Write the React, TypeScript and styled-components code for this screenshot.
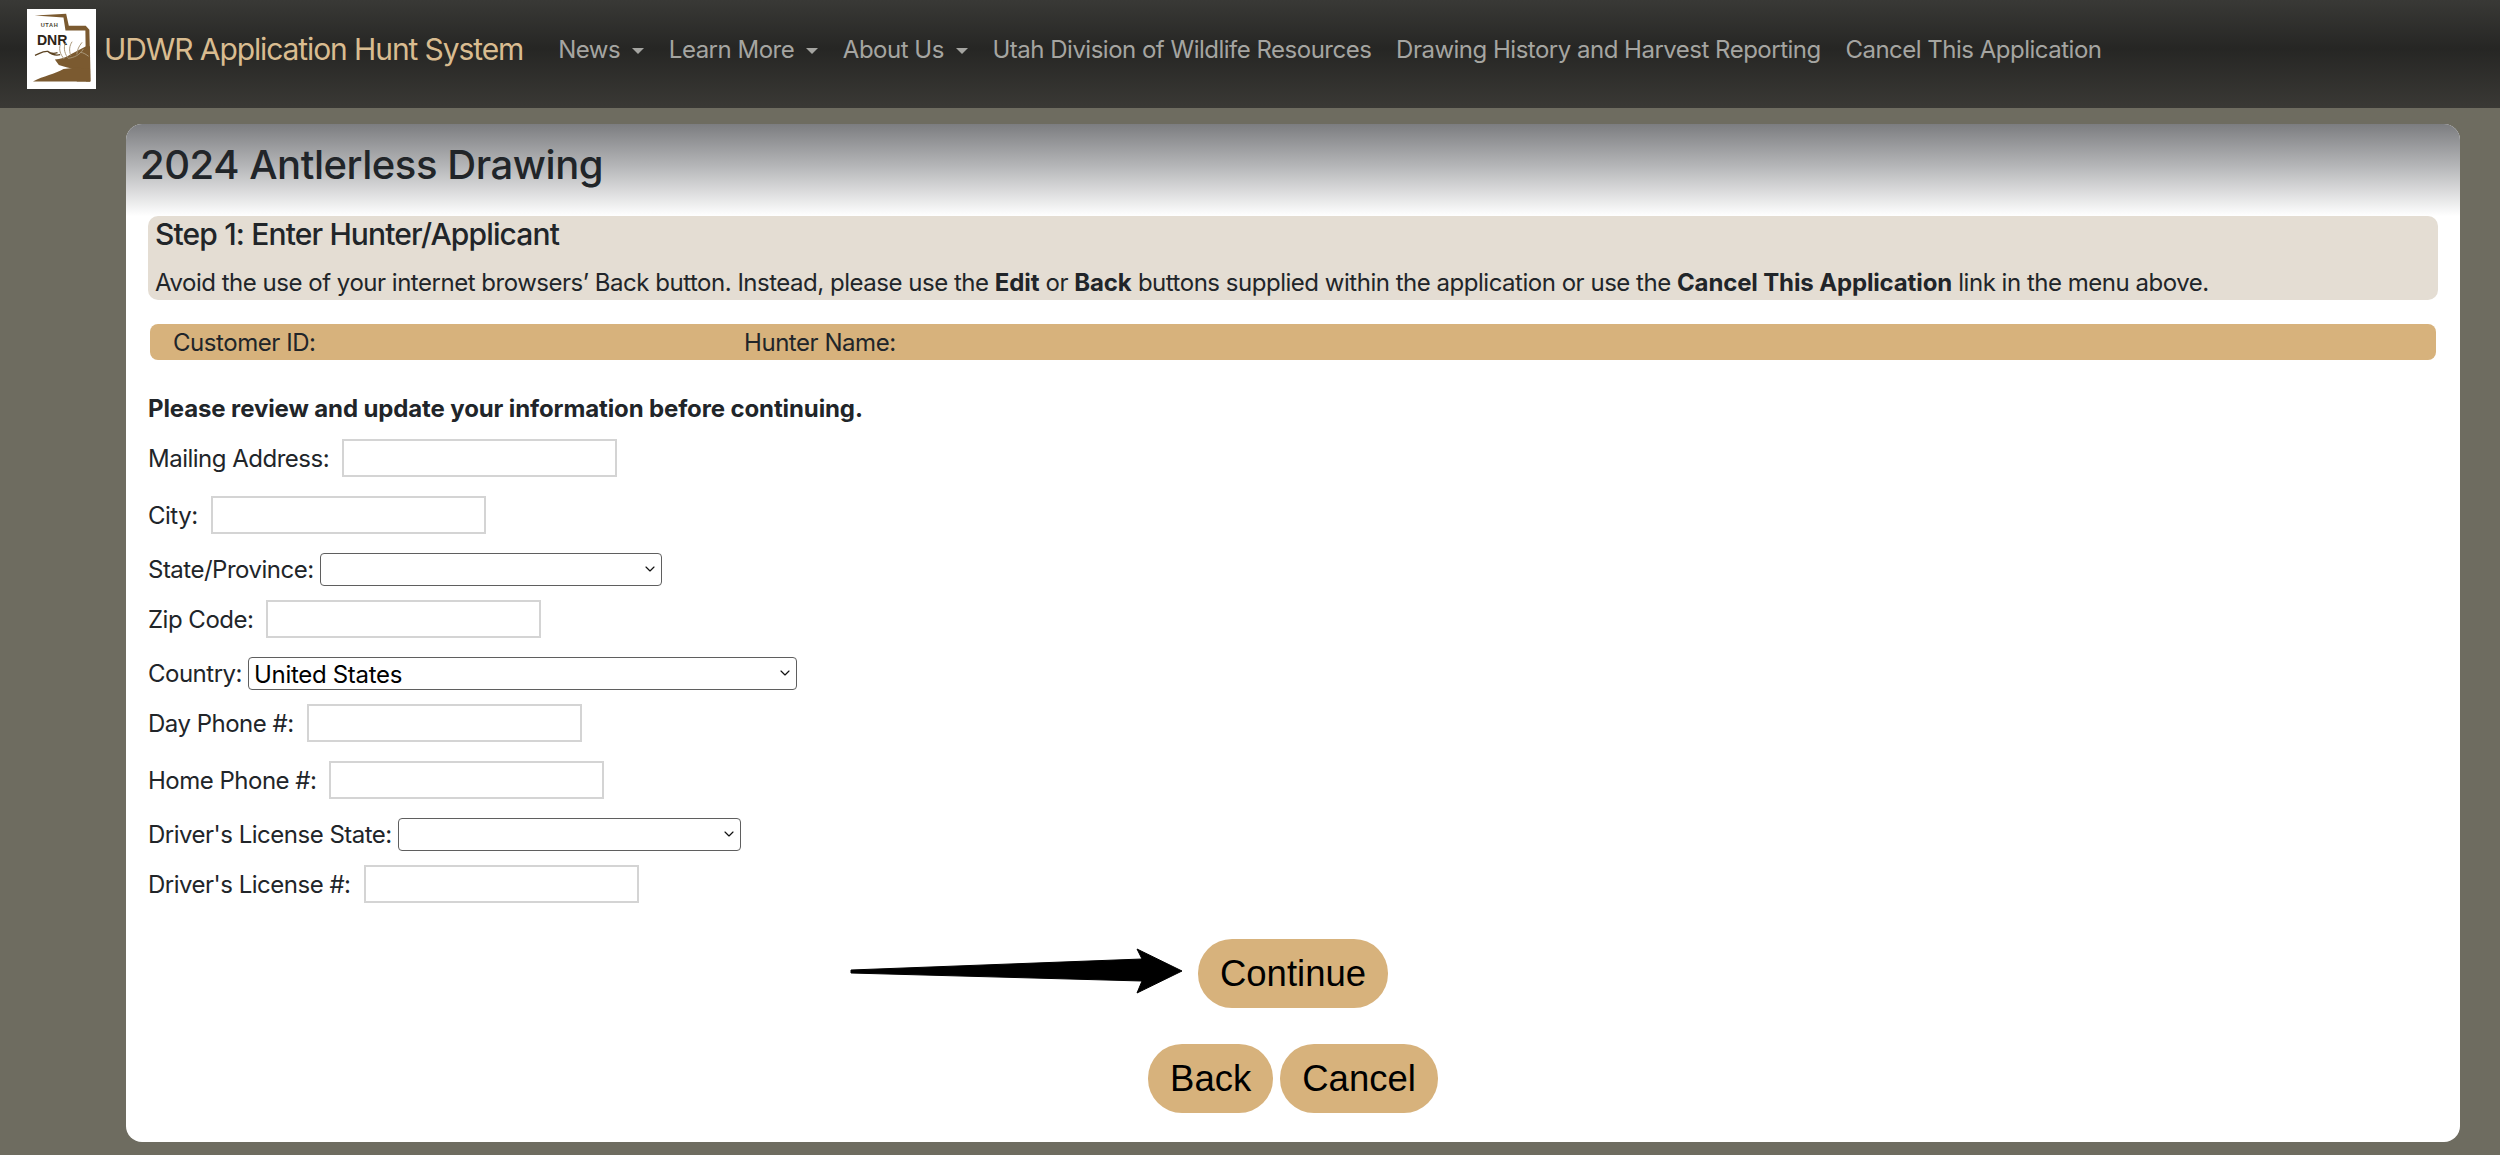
import styled, { createGlobalStyle } from "styled-components";
import { ChevronDown } from "lucide-react";

const GlobalStyle = createGlobalStyle`
  html, body {
    margin: 0;
    padding: 0;
  }
  body {
    font-family: Inter, "Liberation Sans", Arial, sans-serif;
    color: #212529;
    background: #6e6c60;
  }
`;

const Page = styled.div`
  min-height: 1155px;
  box-sizing: border-box;
  background: linear-gradient(#72705f 0, #6e6c60 60px);
`;

const NavBar = styled.nav`
  height: 108px;
  display: flex;
  align-items: flex-start;
  padding-left: 27px;
  background: linear-gradient(#393936 0, #262624 45%, #3a3935 100%);
`;

const LogoBox = styled.div`
  width: 69px;
  height: 80px;
  margin-top: 9px;
  background: #fff;
  flex-shrink: 0;

  svg {
    display: block;
  }
`;

const Brand = styled.a`
  margin: 28px 35px 0 8px;
  font-size: 30px;
  line-height: 42px;
  letter-spacing: -1.1px;
  color: #d9bc90;
  white-space: nowrap;
`;

const NavLinks = styled.div`
  display: flex;
  gap: 24.7px;
  margin-top: 32px;
`;

const NavLink = styled.a<{ $caret?: boolean }>`
  font-size: 24px;
  line-height: 36px;
  letter-spacing: -0.5px;
  color: #a5a5a1;
  white-space: nowrap;

  ${(p) =>
    p.$caret &&
    `
    &::after {
      content: "";
      display: inline-block;
      margin-left: 12px;
      vertical-align: 4px;
      border-top: 6px solid #a5a5a1;
      border-left: 6px solid transparent;
      border-right: 6px solid transparent;
    }
  `}
`;

const Card = styled.main`
  margin: 16px 40px 0 126px;
  height: 1018px;
  box-sizing: border-box;
  background: #fff;
  border-radius: 16px;
  overflow: hidden;
`;

const CardHeader = styled.header`
  height: 92px;
  padding: 0 14px;
  display: flex;
  align-items: center;
  background: linear-gradient(#7c7d80 0, #b4b5b7 45%, #fff 100%);
`;

const Title = styled.h1`
  margin: 0 0 10px;
  font-size: 40px;
  font-weight: 500;
  line-height: 50px;
  letter-spacing: -0.45px;
`;

const CardBody = styled.div`
  padding: 0 22px;
`;

const StepBox = styled.section`
  height: 84px;
  box-sizing: border-box;
  padding: 0 7px;
  background: #e4ddd3;
  border-radius: 10px;
`;

const StepTitle = styled.h2`
  margin: 0;
  font-size: 30px;
  font-weight: 500;
  line-height: 36px;
  letter-spacing: -0.85px;
`;

const StepNote = styled.p`
  margin: 16px 0 0;
  font-size: 24px;
  line-height: 30px;
  letter-spacing: -0.48px;
  white-space: nowrap;

  b {
    letter-spacing: -0.14px;
  }
`;

const InfoBar = styled.div`
  margin: 24px 2px 0;
  height: 36px;
  display: flex;
  align-items: center;
  padding-left: 23px;
  background: #d7b27c;
  border-radius: 8px;
  font-size: 24px;
  letter-spacing: -0.45px;
`;

const InfoItem = styled.span<{ $width?: number }>`
  width: ${(p) => (p.$width ? `${p.$width}px` : "auto")};
`;

const Instructions = styled.p`
  margin: 34px 0 15px;
  font-size: 24px;
  font-weight: 700;
  line-height: 30px;
  letter-spacing: -0.12px;
`;

const FieldRow = styled.div<{ $kind: "input" | "select" }>`
  display: flex;
  align-items: center;
  height: ${(p) => (p.$kind === "input" ? 38 : 33)}px;
  margin-bottom: ${(p) => (p.$kind === "input" ? 19 : 14)}px;
  gap: ${(p) => (p.$kind === "input" ? 13 : 6)}px;
  font-size: 24px;
  letter-spacing: -0.5px;
`;

const TextInput = styled.input`
  width: 275px;
  height: 38px;
  box-sizing: border-box;
  border: 2px solid #d4d4d4;
  background: #fff;
  outline: none;
  padding: 0 4px;
`;

const SelectWrap = styled.div<{ $width: number }>`
  position: relative;
  width: ${(p) => p.$width}px;
  height: 33px;

  svg {
    position: absolute;
    right: 4px;
    top: 8px;
    color: #111;
    pointer-events: none;
  }
`;

const Select = styled.select`
  appearance: none;
  width: 100%;
  height: 100%;
  box-sizing: border-box;
  padding: 2px 5px 0;
  border: 1.5px solid #5f5f5f;
  border-radius: 4px;
  background: #fff;
  color: #000;
  font-family: inherit;
  font-size: 24px;
  letter-spacing: -0.3px;
`;

const ActionRow = styled.div<{ $top: number }>`
  display: flex;
  justify-content: center;
  gap: 7px;
  margin-top: ${(p) => p.$top}px;
`;

const ActionSlot = styled.div`
  position: relative;
`;

const PillButton = styled.button`
  height: 69px;
  padding: 0 22px;
  border: 0;
  border-radius: 34px;
  background: #d7b27c;
  color: #000;
  font-family: "Liberation Sans", Arial, sans-serif;
  font-size: 36.5px;
  cursor: pointer;
`;

const ArrowGraphic = styled.svg`
  position: absolute;
  right: 100%;
  top: 7px;
  margin-right: 12px;
`;

function DnrLogo() {
  return (
    <svg width="69" height="80" viewBox="0 0 208 240">
      {/* state outline */}
      <path d="M23 19 L118 14 L126 50 L177 50 L188 62 L192 218 L178 218 L176 64 L116 64 L110 25 Z" fill="#7b5a30" />
      <text x="68" y="54" fontSize="17" fontWeight="700" letterSpacing="2" textAnchor="middle" fill="#4a3f30" fontFamily="Liberation Sans">
        UTAH
      </text>
      <text x="76" y="108" fontSize="46" fontWeight="700" textAnchor="middle" fill="#2d2417" fontFamily="Liberation Sans" textLength="92" lengthAdjust="spacingAndGlyphs">
        DNR
      </text>
      {/* elk and ground */}
      <path d="M84 152 C100 150 118 146 132 136 L178 112 L190 112 L190 218 L150 218 L150 180 C130 180 112 172 96 168 Z" fill="#7b5a30" />
      <path d="M18 218 C50 200 84 196 110 180 L150 176 L190 180 L190 218 Z" fill="#7b5a30" />
      <path d="M24 139 C38 134 46 126 62 127 C70 133 78 136 92 131 M62 127 C74 137 84 141 100 137" fill="none" stroke="#5c4322" strokeWidth="4" />
      <path
        d="M112 150 C100 136 96 122 100 108 M122 146 C112 130 110 114 116 102 M132 140 C126 124 128 110 136 98 M124 148 C140 146 158 140 170 120 M150 136 C152 122 156 112 166 100 M160 130 C170 130 180 138 186 142"
        fill="none"
        stroke="#a89678"
        strokeWidth="3"
      />
    </svg>
  );
}

function ContinueArrow() {
  return (
    <ArrowGraphic width="340" height="50" viewBox="0 0 340 50">
      <path d="M5 24 L296 13 L291 3 L336 25 L291 47 L296 35 L5 27 Z" fill="#000" stroke="#000" strokeWidth="1" strokeLinejoin="round" />
    </ArrowGraphic>
  );
}

function InputField({ label }: { label: string }) {
  return (
    <FieldRow $kind="input">
      <label>{label}</label>
      <TextInput type="text" />
    </FieldRow>
  );
}

function SelectField({ label, width, value }: { label: string; width: number; value?: string }) {
  return (
    <FieldRow $kind="select">
      <label>{label}</label>
      <SelectWrap $width={width}>
        <Select defaultValue={value ?? ""}>
          <option value={value ?? ""}>{value ?? ""}</option>
        </Select>
        <ChevronDown size={16} strokeWidth={1.75} />
      </SelectWrap>
    </FieldRow>
  );
}

export default function App() {
  return (
    <Page>
      <GlobalStyle />
      <NavBar>
        <LogoBox>
          <DnrLogo />
        </LogoBox>
        <Brand>UDWR Application Hunt System</Brand>
        <NavLinks>
          <NavLink $caret>News</NavLink>
          <NavLink $caret>Learn More</NavLink>
          <NavLink $caret>About Us</NavLink>
          <NavLink>Utah Division of Wildlife Resources</NavLink>
          <NavLink>Drawing History and Harvest Reporting</NavLink>
          <NavLink>Cancel This Application</NavLink>
        </NavLinks>
      </NavBar>
      <Card>
        <CardHeader>
          <Title>2024 Antlerless Drawing</Title>
        </CardHeader>
        <CardBody>
          <StepBox>
            <StepTitle>Step 1: Enter Hunter/Applicant</StepTitle>
            <StepNote>
              Avoid the use of your internet browsers’ Back button. Instead, please use the <b>Edit</b> or{" "}
              <b>Back</b> buttons supplied within the application or use the <b>Cancel This Application</b> link
              in the menu above.
            </StepNote>
          </StepBox>
          <InfoBar>
            <InfoItem $width={571}>Customer ID:</InfoItem>
            <InfoItem>Hunter Name:</InfoItem>
          </InfoBar>
          <Instructions>Please review and update your information before continuing.</Instructions>
          <InputField label="Mailing Address:" />
          <InputField label="City:" />
          <SelectField label="State/Province:" width={342} />
          <InputField label="Zip Code:" />
          <SelectField label="Country:" width={549} value="United States" />
          <InputField label="Day Phone #:" />
          <InputField label="Home Phone #:" />
          <SelectField label="Driver's License State:" width={343} />
          <InputField label="Driver's License #:" />
          <ActionRow $top={36}>
            <ActionSlot>
              <ContinueArrow />
              <PillButton>Continue</PillButton>
            </ActionSlot>
          </ActionRow>
          <ActionRow $top={36}>
            <PillButton>Back</PillButton>
            <PillButton>Cancel</PillButton>
          </ActionRow>
        </CardBody>
      </Card>
    </Page>
  );
}
